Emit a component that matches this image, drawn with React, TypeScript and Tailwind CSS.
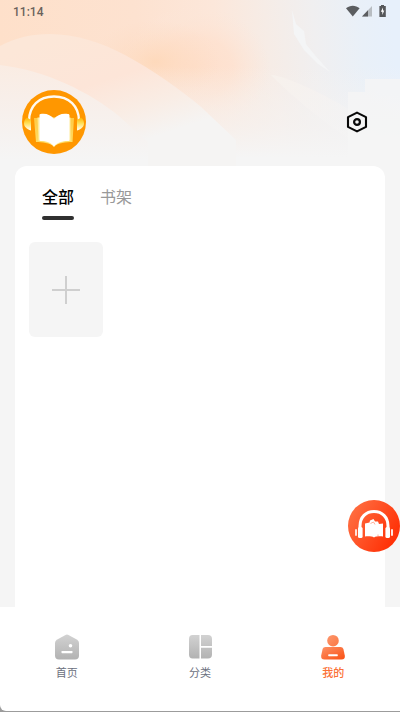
import type { ReactNode } from 'react';

interface NavItem {
  label: string;
  icon: ReactNode;
  active?: boolean;
}

function HeaderBackdrop() {
  return (
    <svg
      viewBox="0 0 400 166"
      preserveAspectRatio="none"
      className="absolute inset-0 -z-10 h-full w-full"
      aria-hidden="true"
    >
      <defs>
        <linearGradient id="base" gradientUnits="userSpaceOnUse" x1="0" y1="40" x2="390" y2="0">
          <stop offset="0" stopColor="#fee0ca" />
          <stop offset="0.35" stopColor="#fde2d0" />
          <stop offset="0.55" stopColor="#fce7da" />
          <stop offset="0.68" stopColor="#f6ece6" />
          <stop offset="0.8" stopColor="#f0eff0" />
          <stop offset="0.92" stopColor="#e9f0f8" />
          <stop offset="1" stopColor="#e7f0fb" />
        </linearGradient>
        <radialGradient id="glow">
          <stop offset="0" stopColor="#fed7b6" stopOpacity="0.8" />
          <stop offset="1" stopColor="#fedcc4" stopOpacity="0" />
        </radialGradient>
        <radialGradient id="peach">
          <stop offset="0" stopColor="#fedfcb" />
          <stop offset="0.5" stopColor="#fee1cf" stopOpacity="0.8" />
          <stop offset="1" stopColor="#fce7da" stopOpacity="0" />
        </radialGradient>
        <linearGradient id="fade" x1="0" y1="0" x2="0" y2="1">
          <stop offset="0.4" stopColor="#f5f4f3" stopOpacity="0" />
          <stop offset="0.75" stopColor="#f5f3f2" stopOpacity="0.65" />
          <stop offset="0.95" stopColor="#f5f5f5" />
        </linearGradient>
        <linearGradient id="wave" gradientUnits="userSpaceOnUse" x1="60" y1="35" x2="100" y2="155">
          <stop offset="0" stopColor="#fce7d8" />
          <stop offset="0.45" stopColor="#fde5d8" />
          <stop offset="0.75" stopColor="#f9ede5" />
          <stop offset="1" stopColor="#f5f4f3" />
        </linearGradient>
        <linearGradient id="front" gradientUnits="userSpaceOnUse" x1="0" y1="65" x2="0" y2="160">
          <stop offset="0" stopColor="#faece3" />
          <stop offset="0.5" stopColor="#f7f0ec" />
          <stop offset="1" stopColor="#f5f5f5" />
        </linearGradient>
        <linearGradient id="beam" gradientUnits="userSpaceOnUse" x1="272" y1="75" x2="340" y2="130">
          <stop offset="0" stopColor="#f7f1ec" />
          <stop offset="1" stopColor="#f5f4f4" stopOpacity="0.4" />
        </linearGradient>
      </defs>
      <rect width="400" height="166" fill="url(#base)" />
      <ellipse cx="195" cy="68" rx="75" ry="62" fill="url(#peach)" />
      <ellipse cx="155" cy="62" rx="65" ry="42" fill="url(#glow)" />
      <rect width="400" height="166" fill="url(#fade)" />
      <path d="M0 46C40 25 85 34 125 55C155 71 180 90 200 106L236 140V166H0Z" fill="url(#wave)" />
      <path d="M0 65C45 70 90 92 120 117C132 128 140 135 148 142V166H0Z" fill="url(#front)" />
      <path d="M271 75C285 76 320 92 350 110V140C318 118 292 96 271 75Z" fill="url(#beam)" />
      <path d="M348 92H365V79H400V166H348Z" fill="#f5f5f5" opacity="0.8" />
      <path d="M292 10L296 24L304 31L306 44L314 54L330 72L318 64L304 50L294 34Z" fill="#f4f5f6" />
    </svg>
  );
}

function StatusIcons() {
  return (
    <svg viewBox="0 0 42 14" className="h-3.5 w-[42px]" aria-hidden="true">
      <path d="M0 3.2C4 -.2 9.6 -.2 13.6 3.2L6.8 11.4Z" fill="#5b5d60" />
      <path d="M26 1V11.4H16Z" fill="#b8bdc2" />
      <path d="M22 5.2V11.4H16Z" fill="#5b5d60" />
      <path d="M35 0H38V1H39.8V12H33.4V1H35Z" fill="#55575a" />
      <path d="M37 2.6L34.8 6.8H36.3V10L38.3 5.6H37Z" fill="#fff" />
    </svg>
  );
}

function Avatar() {
  return (
    <svg viewBox="0 0 64 64" className="h-16 w-16" aria-hidden="true">
      <defs>
        <linearGradient id="cup" x1="0" y1="0" x2="0" y2="1">
          <stop offset="0" stopColor="#ffb300" />
          <stop offset="0.45" stopColor="#ffe05a" />
          <stop offset="1" stopColor="#fff" />
        </linearGradient>
        <linearGradient id="cover" x1="0" y1="0" x2="0" y2="1">
          <stop offset="0" stopColor="#ffca45" />
          <stop offset="1" stopColor="#ffdf69" />
        </linearGradient>
      </defs>
      <circle cx="32" cy="32" r="32" fill="#ff9700" />
      <path d="M7 31C7 16 17 6.5 32 6.5S57 16 57 31" fill="none" stroke="#fffaf0" strokeWidth="2.4" />
      <path d="M5 27.5L9 30V40.5C4.5 39 2 36.5 2 33.5C2 30.5 3.5 28.5 5 27.5Z" fill="url(#cup)" />
      <path d="M59 27.5L55 30V40.5C59.5 39 62 36.5 62 33.5C62 30.5 60.5 28.5 59 27.5Z" fill="url(#cup)" />
      <path d="M12 28H52L50.5 52C44 52 36 53 32 56.5C28 53 20 52 14 52Z" fill="url(#cover)" />
      <path d="M15.5 27.5H48.5V51C43 51 36 52 32 57C28 52 21 51 16.5 51Z" fill="#ffeb9b" />
      <path
        d="M18.5 24C24 23 29 25 32 29C35 25 40 23 46 24C47 24 47.5 24.6 47.5 25.5V49C47.5 50.5 47 51 46 51C40 51 35 52.5 32 56.5C29 52.5 25 51 19 51C18 51 17.5 50.5 17.5 49V25Q17.5 24 18.5 24Z"
        fill="#fff"
      />
    </svg>
  );
}

function SettingsIcon() {
  return (
    <svg viewBox="0 0 22 22" className="h-[22px] w-[22px]" fill="none" stroke="#080808" aria-hidden="true">
      <path d="M11 1.6L20 6.1V15.9L11 20.4L2 15.9V6.1Z" strokeWidth="2.1" strokeLinejoin="round" />
      <circle cx="11" cy="11" r="2.9" strokeWidth="2.2" />
    </svg>
  );
}

function PlayerIcon() {
  return (
    <svg viewBox="0 0 52 52" className="h-[52px] w-[52px]" aria-hidden="true">
      <defs>
        <linearGradient id="player" x1="0" y1="0.2" x2="1" y2="0.8">
          <stop offset="0" stopColor="#ff7043" />
          <stop offset="1" stopColor="#ff2a00" />
        </linearGradient>
      </defs>
      <circle cx="26" cy="26" r="26" fill="url(#player)" />
      <path d="M12 31V26C12 17 18 11.5 26 11.5S40 17 40 26V31" fill="none" stroke="#fff" strokeWidth="3" />
      <rect x="10" y="27" width="4.6" height="11" rx="1.6" fill="#fff" />
      <rect x="37.4" y="27" width="4.6" height="11" rx="1.6" fill="#fff" />
      <path d="M8 30V35M44 30V35" stroke="#ffe3da" strokeWidth="2" strokeLinecap="round" />
      <path
        d="M17 23.5L21.5 22.5L22 20.5L25.5 19L27 21.5L30 21.5L31 24L35 23.5V36.5C31 36.2 28 36.4 26 37.5C24 36.4 21 36.2 17 36.5Z"
        fill="#fff"
      />
      <path d="M30 34.5V36.3M22.5 23.5L25.5 22L27 24.5" fill="none" stroke="#ff9b80" strokeWidth="0.8" />
    </svg>
  );
}

function GreyGradient({ id }: { id: string }) {
  return (
    <linearGradient id={id} x1="0" y1="0" x2="0" y2="1">
      <stop offset="0" stopColor="#d2d2d2" />
      <stop offset="1" stopColor="#b2b2b2" />
    </linearGradient>
  );
}

function HomeIcon() {
  return (
    <svg viewBox="0 0 26 26" className="h-[26px] w-[26px]" aria-hidden="true">
      <defs>
        <GreyGradient id="home" />
      </defs>
      <path
        d="M11.5 .9Q13 .2 14.5 .9L23.2 5.8Q25 7 25 9V21.5Q25 25.5 21 25.5H5Q1 25.5 1 21.5V9Q1 7 2.8 5.8Z"
        fill="url(#home)"
      />
      <circle cx="16.5" cy="11.8" r="1.8" fill="#fff" />
      <rect x="7.5" y="17" width="11" height="2.2" rx="0.6" fill="#fff" />
    </svg>
  );
}

function CategoryIcon() {
  return (
    <svg viewBox="0 0 26 26" className="h-[26px] w-[26px]" aria-hidden="true">
      <defs>
        <GreyGradient id="left" />
        <linearGradient id="right" gradientUnits="userSpaceOnUse" x1="0" y1="1" x2="0" y2="25">
          <stop offset="0" stopColor="#d2d2d2" />
          <stop offset="1" stopColor="#b2b2b2" />
        </linearGradient>
      </defs>
      <path d="M12.5 1V24.5H5.5Q2 24.5 2 20.5V5Q2 1 5.5 1Z" fill="url(#left)" />
      <path d="M14 1H21Q25 1 25 5V12H14ZM14 13.8H25V20.5Q25 24.5 21 24.5H14Z" fill="url(#right)" />
    </svg>
  );
}

function MineIcon() {
  return (
    <svg viewBox="0 0 26 26" className="h-[26px] w-[26px]" aria-hidden="true">
      <defs>
        <linearGradient id="mine" x1="0" y1="0" x2="1" y2="1">
          <stop offset="0" stopColor="#fd9267" />
          <stop offset="1" stopColor="#fa5012" />
        </linearGradient>
        <linearGradient id="head" x1="0" y1="0" x2="1" y2="1">
          <stop offset="0" stopColor="#fd976d" />
          <stop offset="1" stopColor="#fb7743" />
        </linearGradient>
      </defs>
      <circle cx="13" cy="6.7" r="5.8" fill="url(#head)" />
      <path
        d="M5.5 13H20.5Q22.8 13 23.4 15L24.8 21.5Q25.4 25.5 21.5 25.5H4.5Q.6 25.5 1.2 21.5L2.6 15Q3.2 13 5.5 13Z"
        fill="url(#mine)"
      />
      <rect x="8.2" y="20.3" width="9.6" height="1.9" rx="0.6" fill="#fff" />
    </svg>
  );
}

const navItems: NavItem[] = [
  { label: '首页', icon: <HomeIcon /> },
  { label: '分类', icon: <CategoryIcon /> },
  { label: '我的', icon: <MineIcon />, active: true },
];

export default function App() {
  return (
    <div className="relative flex min-h-screen flex-col bg-[#f5f5f5] font-['Roboto','Noto_Sans_CJK_SC',sans-serif]">
      <header className="relative isolate pb-3">
        <HeaderBackdrop />
        <div className="flex h-6 items-center justify-between pr-3 pl-[13px]">
          <time className="text-xs font-medium text-[#6b625c]">11:14</time>
          <StatusIcons />
        </div>
        <div className="mt-[66px] flex items-center justify-between pr-8 pl-[22px]">
          <button type="button" aria-label="个人资料" className="rounded-full">
            <Avatar />
          </button>
          <button type="button" aria-label="设置">
            <SettingsIcon />
          </button>
        </div>
      </header>

      <main className="mx-[15px] flex-1 rounded-t-xl bg-white px-3.5 pt-5">
        <div role="tablist" className="flex gap-[26px] pl-[13px] text-base leading-6">
          <button type="button" role="tab" aria-selected="true" className="flex flex-col gap-1.5 font-medium text-black">
            全部
            <span className="h-1 w-full rounded-full bg-[#303030]" />
          </button>
          <button type="button" role="tab" aria-selected="false" className="self-start text-[#999999]">
            书架
          </button>
        </div>
        <button
          type="button"
          aria-label="添加书籍"
          className="mt-[22px] grid h-[95px] w-[74px] place-items-center rounded-md bg-[#f5f5f5]"
        >
          <svg viewBox="0 0 28 28" className="h-7 w-7" stroke="#cfcfcf" strokeWidth="2" aria-hidden="true">
            <path d="M14 0V28M0 14H28" />
          </svg>
        </button>
      </main>

      <div className="bg-[#9c9c9c] pb-px">
        <nav className="grid h-[104px] grid-cols-3 rounded-bl-md bg-white pt-[27px]">
          {navItems.map((item) => (
            <a
              key={item.label}
              href="#"
              aria-current={item.active ? 'page' : undefined}
              className={`flex flex-col items-center gap-1.5 text-[11px] leading-4 ${
                item.active ? 'font-medium text-[#fb7035]' : 'text-[#6b7080]'
              }`}
            >
              {item.icon}
              {item.label}
            </a>
          ))}
        </nav>
      </div>

      <button type="button" aria-label="播放器" className="absolute right-0 bottom-40 rounded-full">
        <PlayerIcon />
      </button>
    </div>
  );
}
